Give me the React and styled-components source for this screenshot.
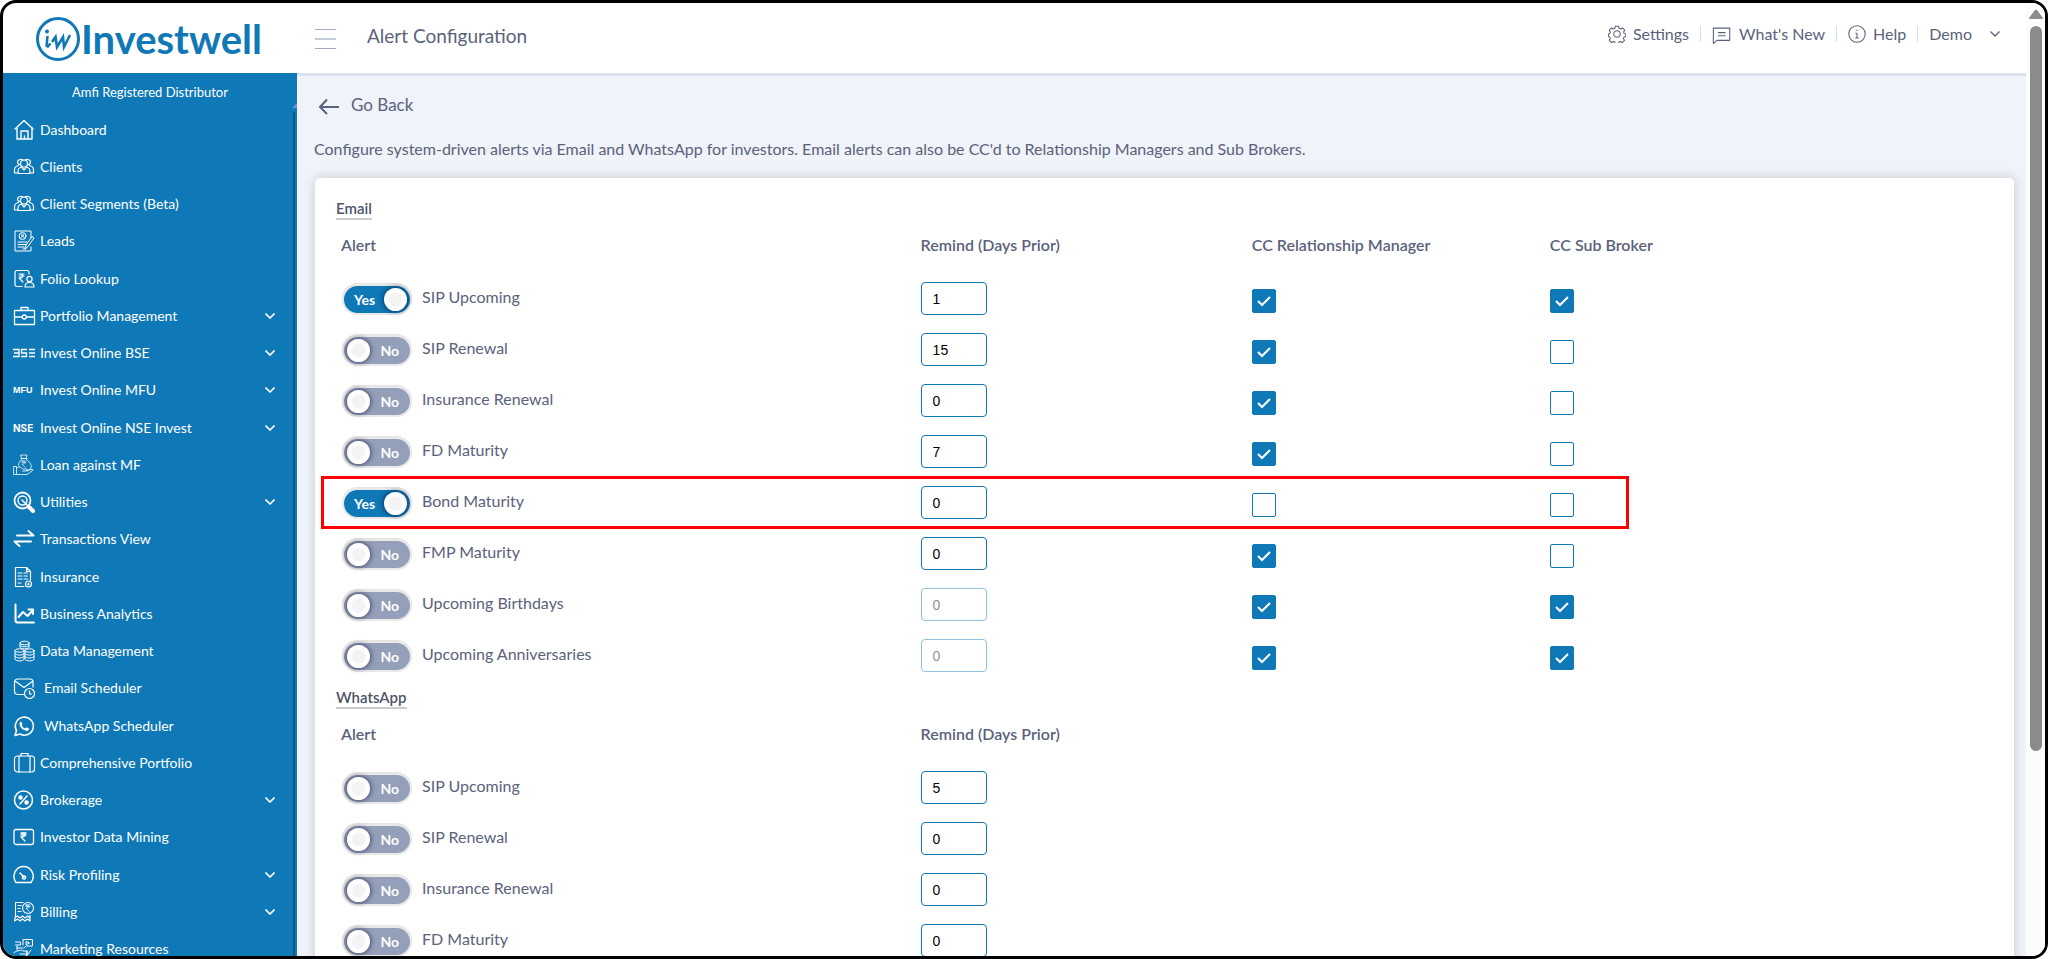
import React, { useState } from 'react';
import styled, { createGlobalStyle, css } from 'styled-components';

const BLUE = '#0f78b7';
const TEXT = '#5a627c';

const GlobalStyle = createGlobalStyle`
  *, *::after { box-sizing: border-box; }
  body {
    margin: 0;
    background: white;
    color: ${TEXT};
    font-family: Lato, "Open Sans", sans-serif;
    font-size: 16px;
    line-height: 20px;
  }
  button, input { font: inherit; color: inherit; }
`

const Frame = styled.div`
  display: flex;
  height: 100vh;
  border: 3px solid black;
  border-radius: 16px;
  overflow: hidden;
`

// Sidebar
const Sidebar = styled.aside`
  flex: none;
  display: flex;
  flex-direction: column;
  width: 294px;
`

const Logo = styled.a`
  flex: none;
  display: flex;
  align-items: center;
  height: 70px;
  padding-left: 32px;
  padding-top: 2px;
  color: ${BLUE};
  font-size: 40px;
  font-weight: 700;
  line-height: 40px;
  text-decoration: none;
`

const SideBody = styled.div`
  position: relative;
  flex: 1;
  min-height: 0;
  overflow: hidden;
  background: ${BLUE};
  color: white;
  font-size: 14px;
`

const Registered = styled.p`
  margin: 0;
  padding: 9px 0;
  font-size: 13px;
  text-align: center;
`

const Rail = styled.div`
  position: absolute;
  top: 39px;
  right: 2px;
  bottom: 0;
  width: 2px;
  background: #0b5888;
`

const RailArrow = styled.div`
  position: absolute;
  top: 30px;
  right: 0;
  border-left: 5px solid transparent;
  border-bottom: 5px solid #6b8ede;
`

const NavList = styled.ul`
  margin: 0;
  padding: 0;
  list-style: none;
`

const NavItem = styled.li`
  &:nth-child(4n) {
    margin-bottom: 1px;
  }
`

const NavLink = styled.a`
  display: flex;
  align-items: center;
  gap: ${({ $wide }) => $wide ? 9 : 5}px;
  height: 37px;
  padding: 0 22px 0 10px;
  color: white;
  text-decoration: none;

  & > svg:first-child {
    flex: none;
    width: 22px;
    height: 22px;
    overflow: visible;
  }
`

const Label = styled.span`
  flex: 1;
`

const Mark = styled.span`
  flex: none;
  width: 22px;
  font-family: ${({ $wide }) => $wide ? 'Inter' : '"Liberation Sans"'}, sans-serif;
  font-size: ${({ $wide }) => $wide ? 10 : 9}px;
  font-weight: 700;
`

// Main area
const Main = styled.main`
  flex: 1;
  min-width: 0;
  display: flex;
  flex-direction: column;
  background: #f0f3f9;
`

const Header = styled.header`
  flex: none;
  display: flex;
  align-items: center;
  height: 73px;
  padding: 0 15px 0 18px;
  border-bottom: 3px solid #dce1ed;
  background: white;
`

const IconButton = styled.button`
  display: flex;
  padding: 2px 0 0;
  border: 0;
  background: none;
  cursor: pointer;
`

const Title = styled.h1`
  flex: 1;
  margin: 0 0 0 31px;
  padding-bottom: 4px;
  font-size: 19px;
  font-weight: 400;
  line-height: 24px;
`

const Tools = styled.nav`
  display: flex;
  align-items: center;
  padding-bottom: 8px;
`

const Tool = styled.button`
  display: flex;
  align-items: center;
  gap: ${({ $menu }) => $menu ? 18 : 7}px;
  height: 16px;
  padding: 0 11px;
  border: 0;
  border-left: ${({ $first }) => $first ? 0 : '1px solid #d9dde6'};
  background: none;
  cursor: pointer;
`

const Content = styled.div`
  flex: 1;
  min-height: 0;
  overflow: hidden;
  padding: 17px 12px 0 17px;
`

const Back = styled.button`
  display: flex;
  align-items: center;
  gap: 12px;
  padding: 0 0 0 4px;
  border: 0;
  background: none;
  font-size: 17px;
  line-height: 24px;
  cursor: pointer;
`

const Description = styled.p`
  margin: 22px 0 19px;
`

const Card = styled.div`
  min-height: 900px;
  margin-left: 1px;
  padding: 14px 22px 0 21px;
  border-radius: 5px;
  background: white;
  box-shadow: 0 0 12px rgba(0, 0, 0, 0.18);
`

const SectionTitle = styled.h2`
  width: fit-content;
  margin: 6px 0 0;
  border-bottom: 2px solid #ccc;
  font-size: 15px;
  font-weight: 600;
  color: #4c5468;
`

const Table = styled.table`
  width: 100%;
  table-layout: fixed;
  border-collapse: collapse;
`

const HeadCell = styled.th`
  width: ${({ $width }) => $width};
  height: 53px;
  padding: 0 5px 3px;
  font-weight: 600;
  text-align: left;
`

const Row = styled.tr`
  position: relative;

  ${({ $marked }) => $marked && css`
    &::after {
      content: '';
      position: absolute;
      top: -1px;
      bottom: -1px;
      left: -15px;
      width: 79%;
      border: 3px solid red;
      pointer-events: none;
    }
  `}
`

const Cell = styled.td`
  height: 51px;
  padding: 0 5px;
`

const Switch = styled.label`
  display: flex;
  align-items: center;
  gap: 12px;
  padding-left: 3px;
  cursor: pointer;
`

const Hidden = styled.input`
  position: absolute;
  opacity: 0;
`

const Track = styled.span`
  display: flex;
  flex-direction: ${({ $on }) => $on ? 'row' : 'row-reverse'};
  align-items: center;
  justify-content: space-between;
  width: 66px;
  height: 27px;
  margin-top: 2px;
  padding: 0 ${({ $on }) => $on ? '3px 0 10px' : '11px 0 3px'};
  border-radius: 14px;
  background: ${({ $on }) => $on ? BLUE : '#949fb9'};
  box-shadow: 0 0 0 2px #e9e9e9, 0 -1px 0 2px #e4e4e4;
  color: white;
  font-size: 14px;
  font-weight: 700;
`

const Knob = styled.span`
  width: 23px;
  height: 23px;
  border-radius: 50%;
  background: radial-gradient(circle, #f3f3f3 0 6px, white 8px, #fafafa);
  box-shadow: 0 0 5px 1px rgba(0, 0, 40, 0.55);
`

const AlertName = styled.span`
  padding-bottom: 3px;
`

const Days = styled.input`
  display: block;
  width: 66px;
  height: 33px;
  padding: 0 11px;
  border: 1px solid ${BLUE};
  border-radius: 4px;
  background: white;
  color: black;
  font-family: "Liberation Sans", Arial, sans-serif;
  font-size: 14px;

  &:disabled {
    opacity: 0.45;
  }
`

const CheckBox = styled.input`
  appearance: none;
  display: block;
  width: 24px;
  height: 24px;
  margin: 5px 0 0;
  border: 1px solid ${BLUE};
  border-radius: 2px;
  background: white;

  &:checked {
    background: ${BLUE} url("data:image/svg+xml,%3Csvg xmlns='http://www.w3.org/2000/svg' viewBox='0 0 22 22' fill='none' stroke='white' stroke-width='2'%3E%3Cpath d='M5 11l4 4 8-8'/%3E%3C/svg%3E");
  }
`

const Scrollbar = styled.div`
  flex: none;
  display: flex;
  flex-direction: column;
  align-items: center;
  gap: 7px;
  width: 19px;
  padding: 6px 0;
  background: #fcfcfc;
`

const Thumb = styled.div`
  width: 12px;
  height: 77%;
  border-radius: 6px;
  background: #8b8b8b;
`

// Icons
const Svg = ({ size = 22, stroke = 1, children }) => (
  <svg width={size} height={size} viewBox='0 0 22 22' fill='none' stroke='currentColor' strokeWidth={stroke} strokeLinecap='round' strokeLinejoin='round' aria-hidden='true'>
    {children}
  </svg>
)

const Rupee = ({ x, y, scale = 1 }) => (
  <path transform={`translate(${x} ${y}) scale(${scale})`} d='M0 0h5M0 2h5M0 0c5 0 5 4 0 4l4 4' />
)

const icons = {
  home: (
    <Svg stroke={1.4}>
      <path d='M2 10l9-8.500 9 8.500M4 8.500V20h15V8.500M8 20v-8h7v8M11.500 20v-3' />
    </Svg>
  ),
  people: (
    <Svg stroke={1.2}>
      <circle cx='11' cy='7.5' r='3.5' />
      <path d='M7.5 8.5C4 9 3.5 4 7 3.5c1.500-.3 2 0 3 .5M14.5 8.5C18 9 18.5 4 15 3.5c-1.500-.3-2 0-3 .5' />
      <path d='M5 17.5v-2c0-2.500 1.500-4 3.500-4.500l2.500 3 2.500-3c2 .5 3.500 2 3.500 4.500v2zM5 17H1.500v-3c0-2.500 1.500-4 4-4.500M17 17h3.500v-3c0-2.500-1.500-4-4-4.500' />
    </Svg>
  ),
  leads: (
    <Svg>
      <path d='M18 8V1H2v20h16v-4' />
      <circle cx='9.5' cy='6' r='3.5' />
      <circle cx='9.5' cy='5.3' r='1' />
      <path d='M7.5 8c1-2 3-2 4 0M5 12h9M5 14.5h8M5 17h6M12 18.5l1-3.500 6-8.500 2 1.500-6 8.500zM10 19h3' />
    </Svg>
  ),
  folio: (
    <Svg stroke={1.2}>
      <path d='M9 18.500H4a2 2 0 0 1-2-2v-12a2 2 0 0 1 2-2h10a2 2 0 0 1 2 2V6' />
      <Rupee x={6} y={6} />
      <circle cx='16.5' cy='11' r='2.6' />
      <path d='M12 19c0-6 9-6 9 0z' />
    </Svg>
  ),
  briefcase: (
    <Svg stroke={1.3}>
      <path d='M1.500 5.500h20v14h-20zM8 5V2.500h7V5M1.500 12h7M14 12h7.500' />
      <circle cx='11.3' cy='12' r='2' />
    </Svg>
  ),
  loan: (
    <Svg stroke={0.8}>
      <path d='M9 5C6 8 5 10 6 12.500M13 5c4 3 6 6 5 9-.5 1.500-2 2-4 2M8 1h6l-1 3.500H9zM8 4.500h6' />
      <Rupee x={9} y={7} scale={0.8} />
      <path d='M1 12.500h2.500v8H1zM3.500 14c3-2 5 0 6.500 1h3c1.500 0 1.500 2 0 2H9.500M14 17l4-1.500c2-.5 2.500.5 1 1.500l-5 3.500H4' />
    </Svg>
  ),
  utilities: (
    <Svg stroke={1.8}>
      <circle cx='9.5' cy='9.5' r='8' />
      <circle cx='9.5' cy='9.5' r='4.5' strokeWidth='1.4' />
      <path d='M9 9l6.500 6.500' strokeWidth='1.5' />
      <path d='M16 16l4 4' strokeWidth='4' />
    </Svg>
  ),
  transfer: (
    <Svg stroke={2}>
      <path d='M4 7.500H20.500l-5-4.500M18 13.500H1.500L6.500 18' />
    </Svg>
  ),
  insurance: (
    <Svg stroke={1.2}>
      <path d='M11 20.500H2.500V1.500h11l4 4V14M13.500 1.500v4h4M5 7h4M5 10h4M5 13h4M11 7h3.500M11 10h3.500M11 13h3.500M5 17h3' />
      <circle cx='15.5' cy='18' r='3' />
      <path d='M14.500 18h2M15.500 17v2' />
    </Svg>
  ),
  analytics: (
    <Svg stroke={2}>
      <path d='M2.500 1.500v16a2 2 0 0 0 2 2H21M5.500 14l4.500-5 4.500 4 5.500-6' />
      <path d='M15.500 6.500h4.500v4.500' />
    </Svg>
  ),
  data: (
    <Svg>
      <ellipse cx='11.5' cy='3' rx='4.5' ry='1.8' />
      <path d='M7 3v4c0 2.500 9 2.500 9 0V3M7 5c0 2.500 9 2.500 9 0' />
      <ellipse cx='6.5' cy='10.5' rx='4.5' ry='1.7' />
      <path d='M2 10.500v8.500c0 2.500 9 2.500 9 0v-8.500M2 13.300c0 2.500 9 2.500 9 0M2 16.200c0 2.500 9 2.500 9 0' />
      <ellipse cx='16.5' cy='10.5' rx='4.5' ry='1.7' />
      <path d='M12 10.500v8.500c0 2.500 9 2.500 9 0v-8.500M12 13.300c0 2.500 9 2.500 9 0M12 16.200c0 2.500 9 2.500 9 0' />
    </Svg>
  ),
  email: (
    <Svg stroke={1.2}>
      <path d='M11 17.500H4.500a3 3 0 0 1-3-3V5a3 3 0 0 1 3-3H17a3 3 0 0 1 3 3v5M2 4l9 6.500L20 4' />
      <circle cx='16.5' cy='16.5' r='5' />
      <path d='M16.500 14v3h2' />
    </Svg>
  ),
  whatsapp: (
    <Svg stroke={1.6}>
      <path d='M2 20.500l1.500-5A9 9 0 1 1 7 19z' />
      <path d='M8 6.500l1.500 2.500-.8 1.300c.8 1.600 1.800 2.500 3.500 3.200l1.300-1.200 2.500 1.200c0 2-1.500 2.700-3 2.300-3.500-.8-6-3.300-6.500-6.500C6.400 8 7 7 8 6.500z' fill='currentColor' stroke='none' />
    </Svg>
  ),
  suitcase: (
    <Svg stroke={1.2}>
      <rect x='1.5' y='4' width='20' height='16' rx='3' />
      <path d='M6 4v16M17 4v16M8 4V1.500h7V4' />
    </Svg>
  ),
  percent: (
    <Svg stroke={1.5}>
      <circle cx='10.5' cy='11' r='9' />
      <path d='M14 7l-7 8' />
      <circle cx='7.5' cy='8.5' r='1.5' fill='currentColor' />
      <circle cx='13.5' cy='13.5' r='1.5' fill='currentColor' />
    </Svg>
  ),
  mining: (
    <Svg stroke={1.3}>
      <rect x='1' y='3.5' width='19.5' height='15' rx='2' />
      <Rupee x={8} y={7} />
    </Svg>
  ),
  gauge: (
    <Svg stroke={1.5}>
      <path d='M3 18.500c-5-7 0-16 7.500-16s13 9 7.500 16zM7 9l4 4' />
      <circle cx='11' cy='13.5' r='1.6' />
    </Svg>
  ),
  billing: (
    <Svg stroke={1.1}>
      <path d='M10 1.500H2.500v13l-1 5.500 3-2 2.500 2 2.500-2 2.500 2 2.500-2 2.500 2V14M2 16.500l2.500-1.500 2.500 2 2.500-2 2.500 2 2.500-2 2.500 2M5 4.500h3M5 7.500h2M5 10.500h3' />
      <circle cx='15' cy='7' r='5.5' />
      <Rupee x={13} y={4} scale={0.8} />
    </Svg>
  ),
  marketing: (
    <Svg>
      <path d='M10 7V1.500h9.500V8H13l-2 2M2.500 4h5v3h-5M4 10h6M13.500 3.500l3 1.500-3 1.500zM1 14.500c4-2 7-3 9-1.500h4v3H7M14 13v5M3 19c5 0 9 1 12-3l3-4M4 8v4' />
    </Svg>
  )
}

const Chevron = ({ stroke = 1.6 }) => (
  <svg width='10' height='6' viewBox='0 0 10 6' fill='none' stroke='currentColor' strokeWidth={stroke} aria-hidden='true'>
    <path d='M.5.5L5 5 9.500.5' />
  </svg>
)

// the BSE wordmark is drawn with horizontal bars
const Bse = () => (
  <svg viewBox='0 0 22 22' fill='none' stroke='currentColor' strokeWidth='1.3' aria-label='BSE'>
    <path d='M0 7.500h6.500M1 11h5M0 14.500h6.500M6 7.500v7M14 7.500H8.500v3.500h5v3.500H8M22 7.500h-6M22 11h-6M22 14.500h-6' />
  </svg>
)

const navItems = [
  { label: 'Dashboard', icon: icons.home },
  { label: 'Clients', icon: icons.people },
  { label: 'Client Segments (Beta)', icon: icons.people },
  { label: 'Leads', icon: icons.leads },
  { label: 'Folio Lookup', icon: icons.folio },
  { label: 'Portfolio Management', icon: icons.briefcase, open: true },
  { label: 'Invest Online BSE', icon: <Bse />, open: true },
  { label: 'Invest Online MFU', icon: <Mark>MFU</Mark>, open: true },
  { label: 'Invest Online NSE Invest', icon: <Mark $wide>NSE</Mark>, open: true },
  { label: 'Loan against MF', icon: icons.loan },
  { label: 'Utilities', icon: icons.utilities, open: true },
  { label: 'Transactions View', icon: icons.transfer },
  { label: 'Insurance', icon: icons.insurance },
  { label: 'Business Analytics', icon: icons.analytics },
  { label: 'Data Management', icon: icons.data },
  { label: 'Email Scheduler', icon: icons.email, wide: true },
  { label: 'WhatsApp Scheduler', icon: icons.whatsapp, wide: true },
  { label: 'Comprehensive Portfolio', icon: icons.suitcase },
  { label: 'Brokerage', icon: icons.percent, open: true },
  { label: 'Investor Data Mining', icon: icons.mining },
  { label: 'Risk Profiling', icon: icons.gauge, open: true },
  { label: 'Billing', icon: icons.billing, open: true },
  { label: 'Marketing Resources', icon: icons.marketing }
]

const emailAlerts = [
  { name: 'SIP Upcoming', on: true, days: 1, manager: true, broker: true },
  { name: 'SIP Renewal', days: 15, manager: true },
  { name: 'Insurance Renewal', days: 0, manager: true },
  { name: 'FD Maturity', days: 7, manager: true },
  { name: 'Bond Maturity', on: true, days: 0, marked: true },
  { name: 'FMP Maturity', days: 0, manager: true },
  { name: 'Upcoming Birthdays', days: 0, disabled: true, manager: true, broker: true },
  { name: 'Upcoming Anniversaries', days: 0, disabled: true, manager: true, broker: true }
]

const whatsappAlerts = [
  { name: 'SIP Upcoming', days: 5 },
  { name: 'SIP Renewal', days: 0 },
  { name: 'Insurance Renewal', days: 0 },
  { name: 'FD Maturity', days: 0 }
]

const AlertRow = ({ alert, cc }) => {

  const [ on, setOn ] = useState(!!alert.on);

  return (
    <Row $marked={alert.marked}>
      <Cell>
        <Switch>
          <Hidden type='checkbox' role='switch' checked={on} onChange={e => setOn(e.target.checked)} />
          <Track $on={on}>
            {on ? 'Yes' : 'No'}
            <Knob />
          </Track>
          <AlertName>{alert.name}</AlertName>
        </Switch>
      </Cell>
      <Cell>
        <Days type='text' defaultValue={alert.days} disabled={alert.disabled} aria-label={`${alert.name} days prior`} />
      </Cell>
      <Cell>
        {cc && <CheckBox type='checkbox' defaultChecked={alert.manager} aria-label={`${alert.name} CC Relationship Manager`} />}
      </Cell>
      <Cell>
        {cc && <CheckBox type='checkbox' defaultChecked={alert.broker} aria-label={`${alert.name} CC Sub Broker`} />}
      </Cell>
    </Row>
  )

}

const AlertSection = ({ title, alerts, cc }) => (
  <section>
    <SectionTitle>{title}</SectionTitle>
    <Table>
      <thead>
        <tr>
          <HeadCell $width='35%'>Alert</HeadCell>
          <HeadCell $width='20%'>Remind (Days Prior)</HeadCell>
          <HeadCell $width='18%'>{cc && 'CC Relationship Manager'}</HeadCell>
          <HeadCell $width='27%'>{cc && 'CC Sub Broker'}</HeadCell>
        </tr>
      </thead>
      <tbody>
        {alerts.map(alert => <AlertRow key={alert.name} alert={alert} cc={cc} />)}
      </tbody>
    </Table>
  </section>
)

const App = () => (
  <>
    <GlobalStyle />
    <Frame>
      <Sidebar>
        <Logo href='#'>
          <svg width='46' height='46' viewBox='0 0 46 46' fill='none' stroke='currentColor' strokeWidth='3' aria-hidden='true'>
            <circle cx='23' cy='23' r='20.5' />
            <circle cx='12' cy='15.5' r='2' fill='currentColor' stroke='none' />
            <path d='M12.500 20l-1 10.500M12 31.500l3.500-4M17 26l3.500-5 1.500 10 6-10 1 10 6-12' strokeWidth='2.6' />
          </svg>
          Investwell
        </Logo>
        <SideBody>
          <Registered>Amfi Registered Distributor</Registered>
          <NavList>
            {navItems.map(item => (
              <NavItem key={item.label}>
                <NavLink href='#' $wide={item.wide}>
                  {item.icon}
                  <Label>{item.label}</Label>
                  {item.open && <Chevron />}
                </NavLink>
              </NavItem>
            ))}
          </NavList>
          <RailArrow />
          <Rail />
        </SideBody>
      </Sidebar>
      <Main>
        <Header>
          <IconButton aria-label='Toggle menu'>
            <svg width='21' height='20' viewBox='0 0 21 20' stroke='#a3abc4' aria-hidden='true'>
              <path d='M0 .5h21M0 19.500h21' />
              <path d='M0 10h21' strokeWidth='2' stroke='#c3c9da' />
            </svg>
          </IconButton>
          <Title>Alert Configuration</Title>
          <Tools>
            <Tool $first>
              <Svg size={18} stroke={1.3}>
                <path d='M9 1.500h4l.6 2.600 1.700.8 2.400-1.300 2.700 2.700-1.300 2.400.7 1.800 2 .5v3l-2.300.8-.7 1.600 1.300 2.300-2.700 2.700-2.400-1.300-1.700.8-.6 2.400H9l-.6-2.400-1.700-.8-2.400 1.300-2.700-2.700 1.300-2.300-.7-1.600-1.700-.8v-3l1.700-.5.7-1.800-1.300-2.400 2.700-2.700 2.400 1.300 1.700-.8z' />
                <circle cx='11' cy='11' r='4' />
              </Svg>
              Settings
            </Tool>
            <Tool>
              <Svg size={20} stroke={1.2}>
                <path d='M1.500 4.500h18v13.500h-14l-4 3.500zM7 9.500h7.500M7 13h7.500' />
              </Svg>
              What's New
            </Tool>
            <Tool>
              <Svg size={18} stroke={1.3}>
                <circle cx='11' cy='11' r='10' />
                <path d='M11 10v6M9.500 10H11M9.500 16h3.500M11 6v.6' />
              </Svg>
              Help
            </Tool>
            <Tool $menu>
              Demo
              <Chevron stroke={1.3} />
            </Tool>
          </Tools>
        </Header>
        <Content>
          <Back>
            <svg width='21' height='20' viewBox='0 0 21 20' fill='none' stroke='currentColor' strokeWidth='2' aria-hidden='true'>
              <path d='M9 4.500L2 12 9 19M2 12h19' />
            </svg>
            Go Back
          </Back>
          <Description>Configure system-driven alerts via Email and WhatsApp for investors. Email alerts can also be CC'd to Relationship Managers and Sub Brokers.</Description>
          <Card>
            <AlertSection title='Email' alerts={emailAlerts} cc />
            <AlertSection title='WhatsApp' alerts={whatsappAlerts} />
          </Card>
        </Content>
      </Main>
      <Scrollbar>
        <svg width='14' height='10' viewBox='0 0 14 10' fill='#8b8b8b' aria-hidden='true'>
          <path d='M6 1q1-1 2 0l6 8q0 1-1 1H1q-1 0-1-1z' />
        </svg>
        <Thumb />
      </Scrollbar>
    </Frame>
  </>
)

export default App;
